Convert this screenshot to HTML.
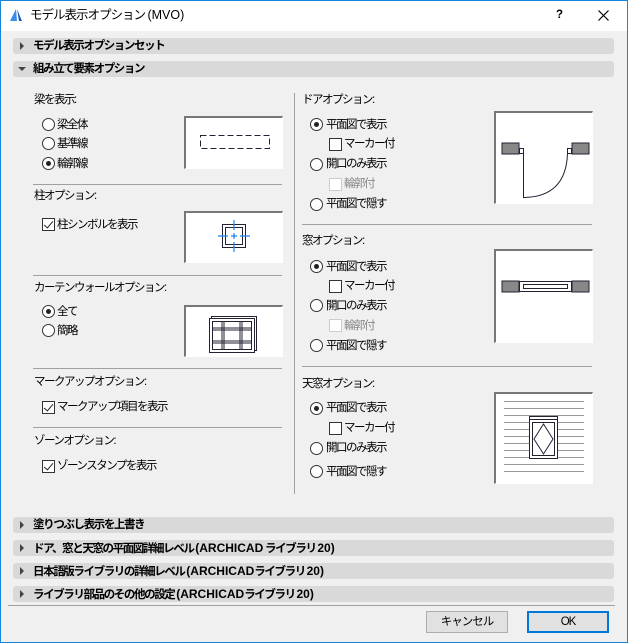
<!DOCTYPE html>
<html><head><meta charset="utf-8"><style>
*{margin:0;padding:0;box-sizing:border-box}
body{width:628px;height:643px;background:#f0f0f0;font-family:"Liberation Sans","Noto Sans CJK JP",sans-serif;font-size:11.5px;letter-spacing:-1.5px;color:#000;position:relative;overflow:hidden}
.a{position:absolute;white-space:nowrap;line-height:14px}
.frame{position:absolute;left:0;top:0;width:628px;height:643px;border:1px solid #1883d7;pointer-events:none}
.tb{position:absolute;left:0;top:0;width:628px;height:31px;background:#fff}
.bar{position:absolute;left:13px;width:601px;height:16px;background:#d9d9d9;border-radius:3px;font-weight:bold;font-size:11.5px;letter-spacing:-1.4px;line-height:16px;padding-left:20px}
.bar span{letter-spacing:0;font-size:12px}
.bar:before{content:"";position:absolute;left:7px;top:4px;border-left:4px solid #444;border-top:4px solid transparent;border-bottom:4px solid transparent}
.bar.open:before{left:5px;top:6px;border-top:4px solid #444;border-left:4px solid transparent;border-right:4px solid transparent;border-bottom:0}
.r{position:absolute;width:13px;height:13px;border:1px solid #333;border-radius:50%;background:#fff}
.r.on:after{content:"";position:absolute;left:3px;top:3px;width:5px;height:5px;border-radius:50%;background:#222}
.c{position:absolute;width:13px;height:13px;border:1px solid #333;background:#fff}
.c.dis{border-color:#ccc}
.c.on:after{content:"";position:absolute;left:3px;top:0px;width:4px;height:8px;border-right:1.5px solid #222;border-bottom:1.5px solid #222;transform:rotate(40deg)}
.hl{position:absolute;height:1px;background:#a0a0a0}
.pv{position:absolute;background:#fff;border-top:2px solid #777;border-left:2px solid #777;border-right:1px solid #fff;border-bottom:1px solid #fff}
.pv svg{position:absolute;left:0;top:0}
.btn{position:absolute;height:22px;background:#e1e1e1;border:1px solid #adadad;text-align:center;line-height:20px;letter-spacing:-1px}
</style></head><body>
<div class="tb"></div>
<svg class="a" style="left:8px;top:7px" width="16" height="16"><path d="M2 14 L8 2 L9 14Z" fill="#3a8ee6"/><path d="M9 2 L11 14 L14 14Z" fill="#1a5fb4"/></svg>
<div class="a" style="left:30px;top:8px;font-size:12.5px;letter-spacing:-1px">モデル表示オプション <span style="letter-spacing:0">(MVO)</span></div>
<div class="a" style="left:556px;top:8px;font-weight:bold">?</div>
<svg class="a" style="left:598px;top:10px" width="11" height="11"><path d="M0.5 0.5L10.5 10.5M10.5 0.5L0.5 10.5" stroke="#000" stroke-width="1.2"/></svg>

<div class="bar" style="top:38px">モデル表示オプションセット</div>
<div class="bar open" style="top:61px">組み立て要素オプション</div>

<div class="a" style="left:34px;top:93px">梁を表示:</div>
<div class="r" style="left:42px;top:118px"></div><div class="a" style="left:57px;top:118px">梁全体</div>
<div class="r" style="left:42px;top:137px"></div><div class="a" style="left:57px;top:137px">基準線</div>
<div class="r on" style="left:42px;top:157px"></div><div class="a" style="left:57px;top:157px">輪郭線</div>
<div class="pv" style="left:184px;top:116px;width:99px;height:53px"><svg width="97" height="51"><rect x="14.5" y="17.5" width="69" height="13" fill="none" stroke="#223" stroke-dasharray="6,3"/></svg></div>
<div class="hl" style="left:33px;top:184px;width:249px"></div>

<div class="a" style="left:34px;top:189px">柱オプション:</div>
<div class="c on" style="left:42px;top:218px"></div><div class="a" style="left:57px;top:218px">柱シンボルを表示</div>
<div class="pv" style="left:184px;top:211px;width:99px;height:52px"><svg width="97" height="50"><rect x="36.5" y="11.5" width="23" height="23" fill="none" stroke="#223"/><rect x="39.5" y="14.5" width="17" height="17" fill="none" stroke="#223"/><path d="M48 7V17M48 20V26M48 29V39M32 23H42M45 23H51M54 23H64" stroke="#1a7ff0" stroke-width="1.2"/></svg></div>
<div class="hl" style="left:33px;top:275px;width:249px"></div>

<div class="a" style="left:34px;top:281px">カーテンウォールオプション:</div>
<div class="r on" style="left:42px;top:305px"></div><div class="a" style="left:57px;top:305px">全て</div>
<div class="r" style="left:42px;top:324px"></div><div class="a" style="left:57px;top:324px">簡略</div>
<div class="pv" style="left:184px;top:305px;width:99px;height:52px"><svg width="97" height="50"><rect x="25.5" y="9.5" width="45" height="34" fill="none" stroke="#223"/><rect x="23.5" y="11.5" width="45" height="34" fill="#fff" stroke="#223"/><rect x="26.5" y="14.5" width="39" height="28" fill="none" stroke="#223"/><path d="M26 21H66M26 23H66M26 34H66M26 36H66M36 14V43M38 14V43M54 14V43M56 14V43" stroke="#223"/></svg></div>
<div class="hl" style="left:33px;top:368px;width:249px"></div>

<div class="a" style="left:34px;top:375px">マークアップオプション:</div>
<div class="c on" style="left:42px;top:401px"></div><div class="a" style="left:57px;top:400px">マークアップ項目を表示</div>
<div class="hl" style="left:33px;top:427px;width:249px"></div>
<div class="a" style="left:34px;top:434px">ゾーンオプション:</div>
<div class="c on" style="left:42px;top:460px"></div><div class="a" style="left:57px;top:459px">ゾーンスタンプを表示</div>

<div style="position:absolute;left:294px;top:93px;width:1px;height:401px;background:#a0a0a0"></div>

<div class="a" style="left:302px;top:93px">ドアオプション:</div>
<div class="r on" style="left:310px;top:118px"></div><div class="a" style="left:326px;top:118px">平面図で表示</div>
<div class="c" style="left:329px;top:138px"></div><div class="a" style="left:344px;top:137px">マーカー付</div>
<div class="r" style="left:310px;top:158px"></div><div class="a" style="left:326px;top:157px">開口のみ表示</div>
<div class="c dis" style="left:329px;top:178px"></div><div class="a" style="left:344px;top:177px;color:#888">輪郭付</div>
<div class="r" style="left:310px;top:198px"></div><div class="a" style="left:326px;top:197px">平面図で隠す</div>
<div class="pv" style="left:494px;top:111px;width:99px;height:93px"><svg width="97" height="91"><rect x="6" y="30" width="17" height="11" fill="#888" stroke="#223"/><rect x="23.5" y="35.5" width="4" height="5" fill="#fff" stroke="#223"/><rect x="76" y="30" width="17" height="11" fill="#888" stroke="#223"/><rect x="71.5" y="35.5" width="4" height="5" fill="#fff" stroke="#223"/><path d="M27.5 40.5V84.5Q70 84 71.5 40.5" fill="none" stroke="#223"/></svg></div>
<div class="hl" style="left:302px;top:224px;width:290px"></div>

<div class="a" style="left:302px;top:234px">窓オプション:</div>
<div class="r on" style="left:310px;top:260px"></div><div class="a" style="left:326px;top:260px">平面図で表示</div>
<div class="c" style="left:329px;top:280px"></div><div class="a" style="left:344px;top:279px">マーカー付</div>
<div class="r" style="left:310px;top:299px"></div><div class="a" style="left:326px;top:299px">開口のみ表示</div>
<div class="c dis" style="left:329px;top:319px"></div><div class="a" style="left:344px;top:319px;color:#888">輪郭付</div>
<div class="r" style="left:310px;top:339px"></div><div class="a" style="left:326px;top:339px">平面図で隠す</div>
<div class="pv" style="left:494px;top:249px;width:99px;height:94px"><svg width="97" height="92"><rect x="6" y="30" width="17" height="11" fill="#888" stroke="#223"/><rect x="76" y="30" width="17" height="11" fill="#888" stroke="#223"/><rect x="23.5" y="30.5" width="52" height="10" fill="#fff" stroke="#223"/><rect x="27.5" y="33.5" width="44" height="4" fill="none" stroke="#223"/></svg></div>
<div class="hl" style="left:302px;top:366px;width:290px"></div>

<div class="a" style="left:302px;top:377px">天窓オプション:</div>
<div class="r on" style="left:310px;top:402px"></div><div class="a" style="left:326px;top:401px">平面図で表示</div>
<div class="c" style="left:329px;top:422px"></div><div class="a" style="left:344px;top:421px">マーカー付</div>
<div class="r" style="left:310px;top:442px"></div><div class="a" style="left:326px;top:441px">開口のみ表示</div>
<div class="r" style="left:310px;top:465px"></div><div class="a" style="left:326px;top:465px">平面図で隠す</div>
<div class="pv" style="left:494px;top:392px;width:99px;height:92px"><svg width="97" height="90">
<g stroke="#999"><path d="M8 7.5H88M8 14.5H88M8 21.5H88M8 28.5H88M8 35.5H88M8 42.5H88M8 49.5H88M8 56.5H88M8 63.5H88M8 70.5H88M8 77.5H88"/></g>
<rect x="33.5" y="22.5" width="28" height="42" fill="#fff" stroke="#223"/><path d="M34 25.5H61" stroke="#223"/><rect x="36.5" y="28.5" width="22" height="33" fill="none" stroke="#223"/><path d="M47.5 30L57 45L47.5 60L38 45Z" fill="none" stroke="#223"/></svg></div>

<div class="bar" style="top:517px">塗りつぶし表示を上書き</div>
<div class="bar" style="top:540px">ドア、窓と天窓の平面図詳細レベル <span>(ARCHICAD</span> ライブラリ <span>20)</span></div>
<div class="bar" style="top:563px">日本語版ライブラリの詳細レベル <span>(ARCHICAD</span>ライブラリ <span>20)</span></div>
<div class="bar" style="top:586px">ライブラリ部品のその他の設定 <span>(ARCHICAD</span>ライブラリ <span>20)</span></div>
<div class="hl" style="left:8px;top:605px;width:607px"></div>
<div class="btn" style="left:426px;top:611px;width:82px">キャンセル</div>
<div class="btn" style="left:527px;top:611px;width:82px;border:2px solid #0078d7;line-height:18px">OK</div>
<div class="frame"></div>
</body></html>
